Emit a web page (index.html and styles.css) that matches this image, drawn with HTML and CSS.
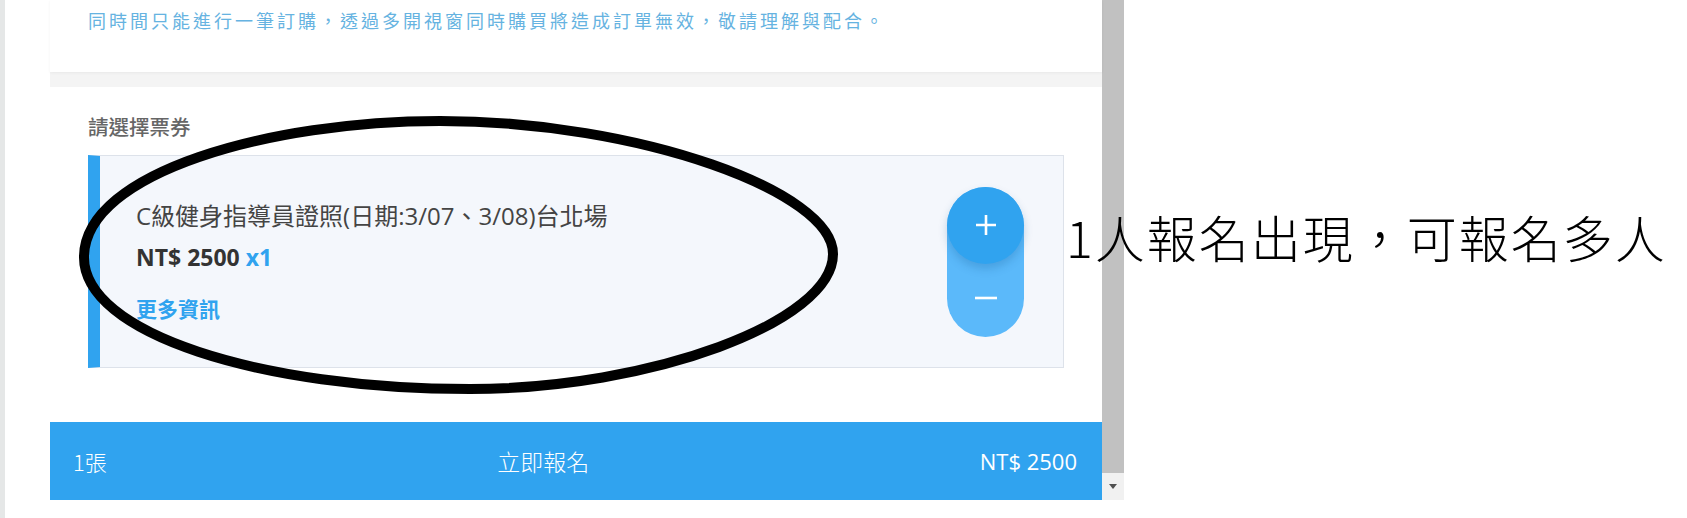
FILE: index.html
```html
<!DOCTYPE html>
<html lang="zh-Hant">
<head>
  <meta charset="UTF-8" />
  <meta name="viewport" content="width=device-width, initial-scale=1" />
  <title>請選擇票券</title>
  <link rel="stylesheet" href="styles.css">
</head>
<body>

  <div class="stage">
    <div class="edge"></div>

    <div class="viewport">
      <div class="page">
        <section class="notice">
          <p>同時間只能進行一筆訂購，透過多開視窗同時購買將造成訂單無效，敬請理解與配合。</p>
        </section>

        <div class="divider"></div>

        <section class="tickets">
          <h2 class="tickets-title">請選擇票券</h2>

          <article class="ticket-card">
            <div class="ticket-info">
              <p class="ticket-name">C級健身指導員證照(日期:3/07、3/08)台北場</p>
              <p class="ticket-price">NT$ 2500 <span class="ticket-qty">x1</span></p>
              <a class="ticket-more" href="#">更多資訊</a>
            </div>

            <div class="stepper">
              <button class="step step-plus" aria-label="增加">
                <svg width="22" height="22" viewBox="0 0 22 22">
                  <path d="M11 1v20M1 11h20" stroke="#fff" stroke-width="2.6" />
                </svg>
              </button>
              <button class="step step-minus" aria-label="減少">
                <svg width="22" height="22" viewBox="0 0 22 22">
                  <path d="M0 11h22" stroke="#fff" stroke-width="2.6" />
                </svg>
              </button>
            </div>
          </article>
        </section>

        <footer class="buy-bar">
          <span class="buy-count">1張</span>
          <span class="buy-action">立即報名</span>
          <span class="buy-total">NT$ 2500</span>
        </footer>
      </div>

      <div class="scrollbar">
        <div class="scroll-thumb"></div>
        <div class="scroll-down">
          <svg width="8" height="5" viewBox="0 0 8 5"><path d="M0 0h8L4 5z" fill="#505050" /></svg>
        </div>
      </div>
    </div>

    <!-- annotation drawn over the screenshot -->
    <svg class="mark" width="1687" height="518" viewBox="0 0 1687 518">
      <path d="M84 256 C 86 172 270 121 440 121 C 640 121 833 192 833 254 C 833 322 650 389 470 389 C 262 389 82 334 84 256 Z"
            fill="none" stroke="#000" stroke-width="10" />
    </svg>
    <p class="note">1人報名出現，可報名多人</p>
  </div>

</body>
</html>
```

FILE: styles.css
```css
* {
  box-sizing: border-box;
  margin: 0;
  padding: 0;
}

body {
  font-family: 'Open Sans', 'Noto Sans CJK TC', sans-serif;
  background: #fff;
  color: #333;
  width: 1687px;
  height: 518px;
  overflow: hidden;
}

.stage {
  position: relative;
  display: flex;
  height: 518px;
}

.edge {
  width: 5px;
  background: #e5e7e7;
}

.viewport {
  display: flex;
  width: 1119px;
  height: 500px;
}

.page {
  flex: 1;
  padding-left: 45px;
  display: flex;
  flex-direction: column;
}

.notice {
  height: 72px;
  padding: 6px 0 0 38px;
  background: #fff;
  box-shadow: 0 1px 3px rgba(0,0,0,0.05);
  position: relative;
  z-index: 1;
}

.notice p {
  font-family: 'Noto Sans CJK TC', sans-serif;
  font-size: 18px;
  line-height: 28px;
  letter-spacing: 3px;
  color: #66b3e1;
}

.divider {
  height: 15px;
  background: #f4f4f4;
}

.tickets {
  padding: 25px 38px 0 38px;
  height: 335px;
}

.tickets-title {
  font-family: 'Noto Sans CJK TC', sans-serif;
  font-size: 20.5px;
  line-height: 28px;
  font-weight: 500;
  color: #666;
  margin-bottom: 15px;
}

.ticket-card {
  height: 213px;
  background: #f4f7fc;
  border: 1px solid #dde2ea;
  border-left: 12px solid #30a3ef;
  display: flex;
  align-items: center;
  justify-content: space-between;
  padding: 0 39px 0 36px;
}

.ticket-name {
  font-size: 24px;
  line-height: 30px;
  color: #444;
}

.ticket-price {
  font-size: 23px;
  line-height: 30px;
  font-weight: 700;
  color: #333;
  margin-top: 11px;
}

.ticket-qty {
  color: #30a3ef;
}

.ticket-more {
  display: block;
  font-family: 'Noto Sans CJK TC', sans-serif;
  font-size: 21px;
  line-height: 30px;
  font-weight: 700;
  color: #30a3ef;
  text-decoration: none;
  margin-top: 21px;
}

.stepper {
  width: 77px;
  height: 150px;
  border-radius: 39px;
  background: #5bb9fa;
  display: flex;
  flex-direction: column;
}

.step {
  border: none;
  cursor: pointer;
  display: flex;
  align-items: center;
  justify-content: center;
  background: transparent;
}

.step-plus {
  height: 77px;
  border-radius: 50%;
  background: #30a3ef;
  box-shadow: 0 5px 8px rgba(20, 90, 150, 0.25);
}

.step-minus {
  flex: 1;
  padding-bottom: 4px;
}

.buy-bar {
  height: 78px;
  margin-top: auto;
  background: #30a3ef;
  color: #fff;
  display: flex;
  align-items: center;
  padding: 0 25px 0 23px;
  font-family: 'Noto Sans CJK TC', sans-serif;
  font-weight: 300;
}

.buy-count {
  font-size: 22px;
}

.buy-action {
  flex: 1;
  text-align: center;
  font-size: 23px;
}

.buy-total {
  font-family: 'Open Sans', sans-serif;
  font-weight: 400;
  font-size: 22px;
}

.scrollbar {
  width: 22px;
  display: flex;
  flex-direction: column;
}

.scroll-thumb {
  flex: 1;
  background: #c1c1c1;
}

.scroll-down {
  height: 27px;
  background: #f1f1f1;
  display: flex;
  align-items: center;
  justify-content: center;
}

.mark {
  position: absolute;
  left: 0;
  top: 0;
  pointer-events: none;
}

.note {
  position: absolute;
  left: 1066px;
  top: 206px;
  font-family: 'Noto Sans CJK TC', sans-serif;
  font-weight: 300;
  font-size: 50px;
  line-height: 60px;
  letter-spacing: 2px;
  color: #000;
  white-space: nowrap;
}
```
